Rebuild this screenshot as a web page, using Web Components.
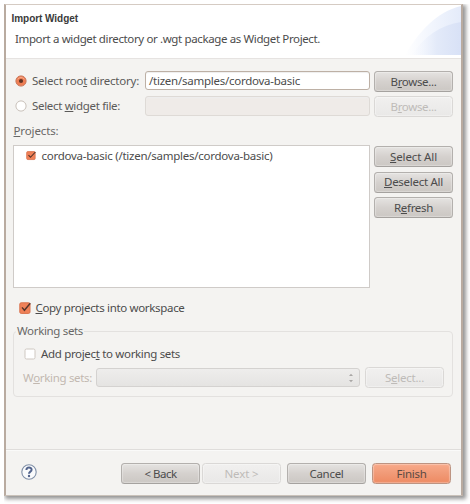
<!DOCTYPE html>
<html lang="en">
<head>
<meta charset="utf-8">
<title>Import Widget</title>
<style>
html,body{margin:0;height:100%;background:#fff;overflow:hidden}
body{font:11.5px/16px "Noto Sans","Open Sans",sans-serif;color:#4c4c4c}
</style>
</head>
<body>
<import-dialog></import-dialog>
<script>
const define = (name, html, setup) => {
  const t = document.createElement('template');
  t.innerHTML = html;
  customElements.define(name, class extends HTMLElement {
    connectedCallback() {
      if (this.shadowRoot) return;
      this.attachShadow({mode: 'open'}).append(t.content.cloneNode(true));
      if (setup) setup(this, this.shadowRoot);
    }
  });
};

// A single line of text whose tracking is adjusted to fill the width in "w".
define('ui-text', `<style>
:host{display:block;white-space:nowrap;flex:none}
span{display:inline-block;white-space:pre}
::slotted(u){text-decoration-thickness:1px;text-underline-offset:1px}
</style><span><slot></slot></span>`, (el, root) => {
  const w = +el.getAttribute('w');
  const s = root.querySelector('span');
  el.style.width = w + 'px';
  const n = el.textContent.length;
  s.style.letterSpacing = ((w - s.getBoundingClientRect().width) / n) + 'px';
});

define('ui-button', `<style>
:host{box-sizing:border-box;display:flex;align-items:center;justify-content:center;width:79px;height:21px;flex:none;
border:1px solid #b3b0ad;border-bottom-color:#a5a29f;border-radius:3.5px;
background:linear-gradient(#e5e3e1,#d5d1ce 50%,#cbc7c3);box-shadow:inset 0 0 1px 1px rgba(255,255,255,.3)}
:host([disabled]){color:#bebbb8;border-color:#dad8d6;background:linear-gradient(#f1f0ef,#e9e8e7);box-shadow:inset 0 0 1px 1px rgba(255,255,255,.35)}
:host([primary]){border-color:#bd9482;background:linear-gradient(#f8aa8a,#f19a77 50%,#ee8a62);color:#5c4a42}
</style><slot></slot>`);

define('ui-field', `<style>
:host{box-sizing:border-box;display:flex;align-items:center;width:225px;height:19px;padding-left:3px;border:1px solid #bdb0a5;border-radius:3px;background:#fff;box-shadow:inset 0 1px 1px #eee}
:host([disabled]){height:20px;background:#efebe8;border-color:#dedad6}
</style><slot></slot>`);

define('ui-radio', `<style>
:host{display:block;width:12px;height:12px;flex:none}svg{display:block}
.on{display:none}:host([checked]) .on{display:block}:host([checked]) .off{display:none}
</style><svg width="12" height="12" viewBox="0 0 12 12">
<g class="off"><circle cx="6" cy="6" r="5.1" fill="#fff" stroke="#c9c1ba"/></g>
<g class="on"><circle cx="6" cy="6" r="5.1" fill="#ef7e54" stroke="#c9775a"/><path d="M2.6 4.2Q6 .7 9.4 4.2" fill="none" stroke="#f7aa8b"/><circle cx="6" cy="6" r="2.1" fill="#613425"/></g></svg>`);

define('ui-check', `<style>
:host{display:block;width:12px;height:12px;flex:none}:host([small]){width:10px;height:9px}
svg{display:block;width:100%;height:100%;overflow:visible}
.on{display:none}:host([checked]) .on{display:block}:host([checked]) .off{display:none}
</style><svg viewBox="0 0 12 12" preserveAspectRatio="none">
<rect class="off" x="1" y="1" width="10" height="10" rx="1.5" fill="#fff" stroke="#cfc8c1"/>
<g class="on"><rect x=".8" y=".8" width="10.2" height="10.6" rx="1.4" fill="#f08158" stroke="#d9724d"/><path d="M3 5.4 5.4 8.3 11.3 1.3" fill="none" stroke="#54342a" stroke-width="1.4"/></g></svg>`);

define('ui-group', `<style>
:host{display:block;box-sizing:border-box;width:440px;height:66px;border:1px solid #e3e1df;border-radius:4px;padding:0 8px 0 9px;position:relative}
.legend{position:absolute;left:2px;top:-9px;padding:0 1px;background:#f4f3f1;color:#686766}
</style><div class="legend"><slot name="legend"></slot></div><slot></slot>`);

define('wizard-header', `<style>
:host{display:flex;justify-content:space-between;background:#fff;border-bottom:1px solid #e6e3e1;box-sizing:border-box;height:54px}
.t{padding:6px 0 0 5.5px}.t ::slotted([slot=title]){font:700 10px/16px "Liberation Sans",Arial,sans-serif;color:#3a3a3a}
.d{padding:4px 0 0 3.5px}svg{display:block;flex:none}
</style><div class="t"><slot name="title"></slot><div class="d"><slot></slot></div></div>
<svg width="56" height="50" viewBox="0 0 56 50"><defs>
<linearGradient id="a"><stop offset="0" stop-color="#fff"/><stop offset=".5" stop-color="#f1f5fd"/><stop offset="1" stop-color="#e4ebfa"/></linearGradient>
<linearGradient id="b"><stop offset="0" stop-color="#f4f7fe" stop-opacity="0"/><stop offset=".5" stop-color="#e3eaf9"/><stop offset="1" stop-color="#d8e1f6"/></linearGradient></defs>
<path d="M0 50C13 28 31 7 56 1V50Z" fill="url(#a)"/><path d="M7 50C19 31 36 20 56 17V50Z" fill="url(#b)"/></svg>`);

define('import-dialog', `<style>
:host{display:flex;flex-direction:column;box-sizing:border-box;width:459px;height:492px;margin:4px 0 0 4px;
border:solid #b9aba0;border-width:1px 2px;border-top-color:#d5cbc3;border-bottom-color:#c9c1b9;background:#f4f3f1;
box-shadow:2px 2px 4px 1px rgba(0,0,0,.42);clip-path:inset(0 -8px -8px 0)}
.row{display:flex;align-items:center}
.sources{padding:12px 0 0 9px;display:grid;gap:4px}
.sources .row{height:21px;align-items:flex-start}
.sources ui-radio{margin-top:4px}
.sources ui-text[lab]{margin:2px 0 0 5px;color:#5b5a59}
.sources ui-field{margin-left:auto}.sources ui-button{margin:0 8px 0 4px}
.pl{padding:6px 0 0 7.5px;color:#686766;height:19px}
.projects{display:flex;padding:3px 8px 0 7px;justify-content:space-between}
.list{box-sizing:border-box;width:357px;height:143px;border:1px solid #cfcbc8;background:#fff;padding:1px 0 0 12px}
.list .row{height:17px;gap:5.5px}
.btns{display:grid;gap:4.5px;align-content:start;padding-top:1px}
.copy{padding-left:13px;margin-top:12px;height:16px;gap:4.5px}
ui-group{margin:15px 0 0 7px}
.add{padding:14px 0 0 1px;height:16px;gap:5px}
.sets{height:21px;margin-top:5px;color:#c2b8b0}
.combo{box-sizing:border-box;width:264px;height:19px;margin:0 5px 0 auto;border:1px solid #d4d2d0;border-radius:3px;background:linear-gradient(#eeedec,#e5e4e2);display:flex;justify-content:flex-end;padding:4px 5px 0 0}
.foot{margin-top:auto;height:46px;border-top:1px solid #dfdddb;box-shadow:inset 0 1px #fafaf9;box-sizing:border-box;padding-left:15px;align-items:flex-start}
.foot svg{margin-top:14px}.foot ui-button{margin-top:13px}
</style>
<wizard-header><ui-text slot="title" w="66.5">Import Widget</ui-text><ui-text w="305">Import a widget directory or .wgt package as Widget Project.</ui-text></wizard-header>
<div class="sources">
<div class="row"><ui-radio checked></ui-radio><ui-text lab w="107">Select roo<u>t</u> directory:</ui-text><ui-field><ui-text w="151">/tizen/samples/cordova-basic</ui-text></ui-field><ui-button><ui-text w="46">B<u>r</u>owse...</ui-text></ui-button></div>
<div class="row"><ui-radio></ui-radio><ui-text lab w="88">Select <u>w</u>idget file:</ui-text><ui-field disabled></ui-field><ui-button disabled><ui-text w="46">B<u>r</u>owse...</ui-text></ui-button></div>
</div>
<div class="pl"><ui-text w="45"><u>P</u>rojects:</ui-text></div>
<div class="projects"><div class="list"><div class="row"><ui-check small checked></ui-check><ui-text w="231">cordova-basic (/tizen/samples/cordova-basic)</ui-text></div></div>
<div class="btns"><ui-button><ui-text w="47"><u>S</u>elect All</ui-text></ui-button><ui-button><ui-text w="59"><u>D</u>eselect All</ui-text></ui-button><ui-button><ui-text w="39">R<u>e</u>fresh</ui-text></ui-button></div></div>
<div class="row copy"><ui-check checked></ui-check><ui-text w="149"><u>C</u>opy projects into workspace</ui-text></div>
<ui-group><ui-text slot="legend" w="66">Working sets</ui-text>
<div class="row add"><ui-check></ui-check><ui-text w="139">Add projec<u>t</u> to working sets</ui-text></div>
<div class="row sets"><ui-text w="69">W<u>o</u>rking sets:</ui-text><div class="combo"><svg width="6" height="10" viewBox="0 0 6 10" fill="#aaa8a6"><path d="M1 3 3 .8 5 3ZM1 7 3 9.2 5 7Z"/></svg></div><ui-button disabled><ui-text w="39">S<u>e</u>lect...</ui-text></ui-button></div>
</ui-group>
<div class="row foot"><svg width="16" height="16" viewBox="0 0 16 16" fill="none"><circle cx="8" cy="8" r="7.2" fill="#fafbfc" stroke="#8190a8" stroke-width="1.1"/><path d="M5.4 6C5.5 2.8 10.6 2.9 10.6 5.7 10.6 7.7 8 7.6 8 9.8" stroke="#53648c" stroke-width="2"/><circle cx="8" cy="12" r="1.2" fill="#53648c"/></svg>
<ui-button style="margin-left:84px"><ui-text w="32">&lt; Back</ui-text></ui-button><ui-button disabled style="margin-left:2px"><ui-text w="34">Next &gt;</ui-text></ui-button><ui-button style="margin-left:6px"><ui-text w="34">Cancel</ui-text></ui-button><ui-button primary style="margin-left:6px"><ui-text w="30">Finish</ui-text></ui-button></div>
`);
</script>
</body>
</html>
